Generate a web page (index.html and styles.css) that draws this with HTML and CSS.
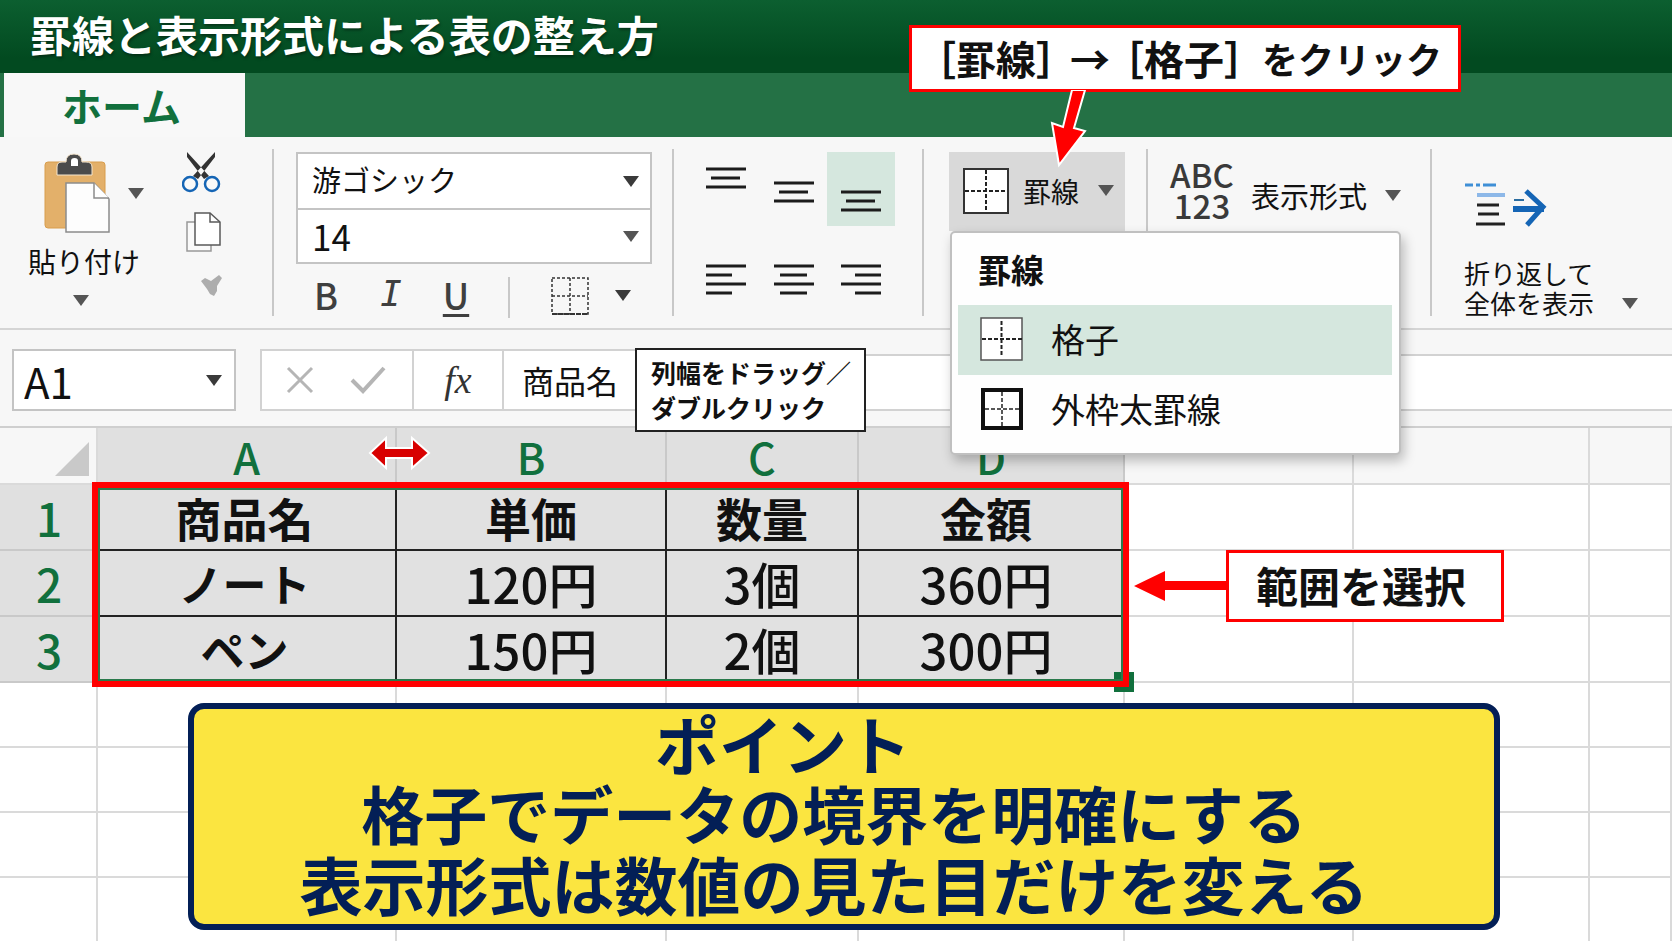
FILE: index.html
```html
<!DOCTYPE html>
<html lang="ja">
<head>
    <meta charset="UTF-8">
    <meta name="viewport" content="width=device-width, initial-scale=1.0">
    <title>罫線と表示形式による表の整え方</title>
    <link rel="stylesheet" href="styles.css">
</head>
<body>
    <header class="title-bar">
        <h1>罫線と表示形式による表の整え方</h1>
    </header>
    <nav class="tabs">
        <button type="button" class="tab">ホーム</button>
    </nav>

    <section class="ribbon">
        <!-- クリップボード -->
        <div class="group group-clipboard">
            <div class="paste">
                <button type="button" class="paste-button" aria-label="貼り付け">
                    <svg width="68" height="80" viewBox="0 0 68 80">
                        <rect x="1" y="9" width="60" height="66" rx="3" fill="#e3b06a" stroke="#d89d4c"/>
                        <path d="M13 22v-8q0-5 5-5h4q0-8 8-8t8 8h4q6 0 6 5v8z" fill="#4b4b4b" stroke="#f5e6cf" stroke-width="1"/>
                        <path d="M27 13V8q0-3 3.500-3T34 8v5z" fill="#fff"/>
                        <path d="M22 30h28l15 16v33H22z" fill="#fdfdfd" stroke="#8c8c8c" stroke-width="1.500"/>
                        <path d="M50 30v15h15" fill="#fff" stroke="#8c8c8c" stroke-width="1.500"/>
                    </svg>
                    <span class="caret"></span>
                </button>
                <span class="paste-label">貼り付け</span>
                <span class="caret"></span>
            </div>
            <div class="clip-tools">
                <button type="button" aria-label="切り取り">
                    <svg width="42" height="44" viewBox="0 0 42 44">
                        <path d="M5 3v5l17 22 5-3zM33 3v5L16 30l-5-3z" fill="#333"/>
                        <circle cx="8" cy="35" r="7" fill="#f9f9f9" stroke="#1565b5" stroke-width="2.500"/>
                        <circle cx="30" cy="35" r="7" fill="#f9f9f9" stroke="#1565b5" stroke-width="2.500"/>
                    </svg>
                </button>
                <button type="button" aria-label="コピー">
                    <svg width="42" height="44" viewBox="0 0 42 44">
                        <path d="M5 13h24v29H5z" fill="#fafafa" stroke="#999" stroke-width="1.500"/>
                        <path d="M13 4h15l10 9v23H13z" fill="#fff" stroke="#5a5a5a" stroke-width="1.500"/>
                        <path d="M28 4v9h10" fill="none" stroke="#5a5a5a" stroke-width="1.500"/>
                    </svg>
                </button>
                <button type="button" aria-label="書式のコピー">
                    <svg width="42" height="36" viewBox="0 0 42 36">
                        <path d="M19 12l4-3 6 3 8-6 3 3-5 8v5l-3 5-4-2-3-5z" fill="#adadad"/>
                    </svg>
                </button>
            </div>
        </div>

        <!-- フォント -->
        <div class="group group-font">
            <div class="combo">
                <div class="combo-row">
                    <select class="font-name" aria-label="フォント名"><option>游ゴシック</option></select>
                    <span class="caret dark"></span>
                </div>
                <div class="combo-row">
                    <select class="font-size" aria-label="フォントサイズ"><option>14</option></select>
                    <span class="caret"></span>
                </div>
            </div>
            <div class="font-tools">
                <button type="button" class="bold" aria-label="太字">B</button>
                <button type="button" class="italic" aria-label="斜体">I</button>
                <button type="button" class="underline" aria-label="下線">U</button>
                <button type="button" class="line-tool" aria-label="罫線の種類">
                    <svg width="40" height="40" viewBox="0 0 40 40">
                        <path d="M2 2h36v36H2zM20 2v36M2 20h36" fill="none" stroke="#333" stroke-width="1.500" stroke-dasharray="3 2"/>
                        <path d="M2 38h36" stroke="#333" stroke-width="2" stroke-dasharray="5 1"/>
                    </svg>
                    <span class="caret dark"></span>
                </button>
            </div>
        </div>

        <!-- 配置 -->
        <div class="group group-align">
            <button type="button" class="align-top" aria-label="上揃え">
                <svg width="40" height="22" viewBox="0 0 40 22"><path d="M0 2h40M5 11h29M0 20h40"/></svg>
            </button>
            <button type="button" class="align-middle" aria-label="上下中央揃え">
                <svg width="40" height="22" viewBox="0 0 40 22"><path d="M0 2h40M5 11h29M0 20h40"/></svg>
            </button>
            <button type="button" class="align-bottom" aria-label="下揃え">
                <svg width="40" height="22" viewBox="0 0 40 22"><path d="M0 2h40M5 11h29M0 20h40"/></svg>
            </button>
            <button type="button" aria-label="左揃え">
                <svg width="40" height="31" viewBox="0 0 40 31"><path d="M0 2h40M0 11h26M0 20h40M0 29h26"/></svg>
            </button>
            <button type="button" aria-label="中央揃え">
                <svg width="40" height="31" viewBox="0 0 40 31"><path d="M0 2h40M6 11h27M0 20h40M6 29h27"/></svg>
            </button>
            <button type="button" aria-label="右揃え">
                <svg width="40" height="31" viewBox="0 0 40 31"><path d="M0 2h40M14 11h26M0 20h40M14 29h26"/></svg>
            </button>
        </div>

        <!-- 罫線 -->
        <div class="group group-border">
            <button type="button" class="border-button">
                <svg width="46" height="46" viewBox="0 0 46 46">
                    <rect x="1" y="1" width="44" height="44" fill="#fff" stroke="#333" stroke-width="2"/>
                    <path d="M23 2v42M2 23h42" stroke="#222" stroke-width="2" stroke-dasharray="4 2"/>
                </svg>
                <span>罫線</span>
                <span class="caret"></span>
            </button>
            <div class="menu">
                <h2>罫線</h2>
                <button type="button" class="menu-item active">
                    <svg width="44" height="44" viewBox="0 0 44 44">
                        <rect x="1" y="1" width="41" height="42" fill="#fff" stroke="#555" stroke-width="1.500"/>
                        <path d="M21.500 4v36M2 22h40" stroke="#222" stroke-width="2" stroke-dasharray="4 2"/>
                    </svg>
                    <span>格子</span>
                </button>
                <button type="button" class="menu-item">
                    <svg width="44" height="44" viewBox="0 0 44 44">
                        <rect x="3" y="3" width="38" height="38" fill="#fff" stroke="#111" stroke-width="4"/>
                        <path d="M22 5v34M5 22h34" stroke="#222" stroke-width="1.500" stroke-dasharray="4 2"/>
                    </svg>
                    <span>外枠太罫線</span>
                </button>
            </div>
        </div>

        <!-- 表示形式 -->
        <div class="group group-format">
            <button type="button" class="format-button">
                <span class="abc">ABC<br>123</span>
                <span class="format-label">表示形式 <span class="caret"></span></span>
            </button>
        </div>

        <div class="group group-wrap">
            <button type="button" class="wrap-button">
                <svg width="84" height="46" viewBox="0 0 84 46">
                    <path d="M1 4h8M12 4h4M19 4h13" stroke="#3f8fd6" stroke-width="3"/>
                    <path d="M13 14h28" stroke="#8db8e8" stroke-width="4"/>
                    <path d="M13 24h22M14 33h21M12 43h29" stroke="#222" stroke-width="3"/>
                    <path d="M50 19h10" stroke="#2a6ca0" stroke-width="2"/>
                    <path d="M49 28h31" stroke="#1565b5" stroke-width="6"/>
                    <path d="M62 10l17 16-16 18" fill="none" stroke="#1565b5" stroke-width="5"/>
                </svg>
                <span class="wrap-text">
                    <span>折り返して<br>全体を表示</span>
                    <span class="caret"></span>
                </span>
            </button>
        </div>
    </section>

    <section class="formula-row">
        <div class="name-box">
            <input type="text" value="A1" aria-label="名前ボックス">
            <span class="caret dark"></span>
        </div>
        <div class="formula-box">
            <div class="formula-buttons">
                <button type="button" aria-label="キャンセル">
                    <svg width="28" height="28" viewBox="0 0 28 28"><path d="M2 2l24 24M26 2L2 26" stroke="#b5b5b5" stroke-width="3"/></svg>
                </button>
                <button type="button" aria-label="入力">
                    <svg width="36" height="28" viewBox="0 0 36 28"><path d="M2 14l11 11L34 2" fill="none" stroke="#b5b5b5" stroke-width="4"/></svg>
                </button>
            </div>
            <button type="button" class="fx">fx</button>
            <input type="text" class="formula" value="商品名" aria-label="数式バー">
        </div>
        <div class="formula-rest"></div>
        <div class="tip">列幅をドラッグ／<br>ダブルクリック</div>
    </section>

    <main class="sheet">
        <table>
            <colgroup>
                <col class="col-head"><col class="col-a"><col class="col-b"><col class="col-c"><col class="col-d"><col class="col-e"><col class="col-f"><col>
            </colgroup>
            <thead>
                <tr>
                    <th class="corner"><svg width="34" height="34" viewBox="0 0 34 34"><path d="M34 0v34H0z" fill="#c9c9c9"/></svg></th>
                    <th class="on">A</th><th class="on">B</th><th class="on">C</th><th class="on">D</th>
                    <th></th><th></th><th></th>
                </tr>
            </thead>
            <tbody>
                <tr class="picked names"><th>1</th><td>商品名</td><td>単価</td><td>数量</td><td>金額</td><td></td><td></td><td></td></tr>
                <tr class="picked"><th>2</th><td>ノート</td><td>120円</td><td>3個</td><td>360円</td><td></td><td></td><td></td></tr>
                <tr class="picked"><th>3</th><td>ペン</td><td>150円</td><td>2個</td><td>300円</td><td></td><td></td><td></td></tr>
                <tr><th></th><td></td><td></td><td></td><td></td><td></td><td></td><td></td></tr>
                <tr><th></th><td></td><td></td><td></td><td></td><td></td><td></td><td></td></tr>
                <tr><th></th><td></td><td></td><td></td><td></td><td></td><td></td><td></td></tr>
                <tr><th></th><td></td><td></td><td></td><td></td><td></td><td></td><td></td></tr>
            </tbody>
        </table>
        <div class="fill-handle"></div>
        <div class="selection"></div>
        <svg class="resize-arrow" width="64" height="36" viewBox="0 0 64 36">
            <path d="M2 18L18 3v10h26V3l17 15-17 15V23H18v10z" fill="#d80000" stroke="#fff" stroke-width="2"/>
        </svg>
        <div class="range-note">
            <svg width="92" height="32" viewBox="0 0 92 32"><path d="M0 16L31 1v10h61v9H31v11z" fill="#f00"/></svg>
            <span>範囲を選択</span>
        </div>
        <div class="point">
            <h2>ポイント</h2>
            <p>格子でデータの境界を明確にする<br>表示形式は数値の見た目だけを変える</p>
        </div>
    </main>

    <div class="step-note">
        <span>［罫線］</span><span class="to">→</span><span>［格子］</span><span class="kana">をクリック</span>
        <svg class="step-arrow" width="44" height="78" viewBox="0 0 44 78">
            <path d="M24 0L15 37 4 33l7 42 26-34-11-3L37 0z" fill="#f00" stroke="#fff" stroke-width="2"/>
        </svg>
    </div>
</body>
</html>
```
FILE: styles.css
```css
* {
    box-sizing: border-box;
}
body {
    margin: 0;
    min-height: 100vh;
    display: flex;
    flex-direction: column;
    position: relative;
    overflow: hidden;
    font-family: "Noto Sans CJK JP", sans-serif;
    color: #111;
    background: #fff;
}
h1, h2, p {
    margin: 0;
}
button, input, select {
    font-family: inherit;
    color: inherit;
    background: none;
    border: none;
    padding: 0;
    margin: 0;
}
svg {
    display: block;
    flex: none;
}
.title-bar {
    height: 73px;
    padding: 0 0 6px 30px;
    display: flex;
    align-items: center;
    background: linear-gradient(#0c5f30, #024a20 80%);
}
.title-bar h1 {
    font-size: 42px;
    line-height: 66px;
    font-weight: bold;
    color: #fff;
    text-shadow: 1px 2px 3px rgba(0, 0, 0, 0.4);
}
.tabs {
    height: 64px;
    padding-left: 4px;
    background: #247145;
}
.tab {
    width: 241px;
    height: 64px;
    padding: 0 6px 0 0;
    font-size: 40px;
    font-weight: bold;
    color: #11703d;
    background: #f8f8f8;
}
.caret {
    flex: none;
    border-left: 8px solid transparent;
    border-right: 8px solid transparent;
    border-top: 11px solid #555;
}
.caret.dark {
    border-top-color: #3a3a3a;
}

/* リボン */
.ribbon {
    display: flex;
    padding: 12px 0;
    background: #f7f7f7;
    border-bottom: 2px solid #d5d5d5;
}
.group {
    height: 167px;
    flex: none;
    border-right: 2px solid #c8c8c8;
}
.group-clipboard {
    width: 274px;
    padding-left: 28px;
    display: flex;
    gap: 40px;
}
.paste {
    width: 114px;
    display: flex;
    flex-direction: column;
}
.paste-button {
    display: flex;
    align-items: center;
    gap: 16px;
    padding: 4px 0 0 16px;
}
.paste-label {
    font-size: 28px;
    line-height: 56px;
    white-space: nowrap;
}
.paste > .caret {
    width: 16px;
    margin: 6px 0 0 45px;
}
.clip-tools {
    display: flex;
    flex-direction: column;
    gap: 16px;
}
.group-font {
    width: 400px;
    padding: 3px 20px 0 22px;
}
.combo {
    border: 2px solid #c4c4c4;
    background: #fff;
}
.combo-row {
    display: flex;
    align-items: center;
    height: 54px;
    padding-right: 11px;
}
.combo-row + .combo-row {
    border-top: 2px solid #c4c4c4;
}
.combo-row select {
    appearance: none;
    flex: 1;
    height: 52px;
    padding: 0 0 4px 14px;
}
.font-name {
    font-size: 29px;
}
.font-size {
    font-size: 35px;
}
.font-tools {
    display: flex;
    align-items: center;
    height: 41px;
    margin-top: 13px;
    padding-left: 9px;
    color: #3f3f3f;
}
.font-tools button {
    width: 42px;
    padding-bottom: 8px;
    font-size: 36px;
    line-height: 36px;
    font-weight: 500;
}
.font-tools .italic {
    margin: 0 23px;
    font-family: "DejaVu Sans Mono", monospace;
    font-size: 36px;
    font-style: italic;
}
.font-tools .underline {
    text-decoration: underline;
    text-decoration-thickness: 3px;
    text-underline-offset: 4px;
}
.font-tools .line-tool {
    width: 128px;
    height: 41px;
    display: flex;
    align-items: center;
    gap: 25px;
    margin-left: 31px;
    padding: 0 0 4px 40px;
    border-left: 2px solid #c8c8c8;
}
.group-align {
    width: 250px;
    padding: 3px 0 0 18px;
    display: grid;
    grid-template-columns: 68px 67px 68px;
    grid-template-rows: 74px 50px;
    row-gap: 28px;
}
.group-align button {
    display: flex;
    justify-content: center;
    align-items: center;
}
.group-align path {
    stroke: #1c1c1c;
    stroke-width: 3;
}
.group-align .align-top {
    align-items: flex-start;
    padding-top: 15px;
}
.group-align .align-middle {
    padding-top: 6px;
}
.group-align .align-bottom {
    align-items: flex-end;
    padding-bottom: 14px;
    background: #d5e7de;
}
.group-border {
    width: 224px;
    padding: 3px 0 0 25px;
    position: relative;
}
.border-button {
    display: flex;
    align-items: center;
    gap: 14px;
    width: 176px;
    height: 79px;
    padding: 0 0 2px 14px;
    font-size: 28px;
    background: #d9d9d9;
}
.border-button .caret {
    margin-left: 5px;
}
.menu {
    position: absolute;
    left: 26px;
    top: 82px;
    z-index: 5;
    width: 451px;
    padding: 4px 7px 8px 6px;
    border: 2px solid #c0c0c0;
    border-radius: 5px;
    background: #fefefe;
    box-shadow: 3px 6px 12px rgba(0, 0, 0, 0.25);
}
.menu h2 {
    padding: 0 0 4px 20px;
    font-size: 33px;
    line-height: 64px;
    font-weight: bold;
}
.menu-item {
    display: flex;
    align-items: center;
    gap: 27px;
    width: 100%;
    height: 70px;
    padding: 0 0 2px 22px;
    font-size: 34px;
    line-height: 44px;
}
.menu-item.active {
    background: #d5e7de;
}
.group-format {
    width: 284px;
    padding: 0 0 0 21px;
}
.format-button {
    display: flex;
    align-items: center;
    gap: 16px;
    height: 82px;
    font-size: 29px;
}
.format-label {
    display: flex;
    align-items: center;
    gap: 18px;
    padding-top: 10px;
}
.abc {
    width: 66px;
    font-size: 33px;
    line-height: 31px;
    font-weight: 500;
    color: #3a3a3a;
}
.group-wrap {
    flex: 1;
    padding: 32px 0 0 32px;
    border-right: none;
}
.wrap-button {
    text-align: left;
}
.wrap-text {
    display: flex;
    align-items: flex-end;
    gap: 28px;
    margin-top: 31px;
    font-size: 26px;
    line-height: 30px;
    white-space: nowrap;
}
.wrap-text .caret {
    margin-bottom: 9px;
}

/* 数式バー */
.formula-row {
    display: flex;
    height: 98px;
    padding: 19px 0 0 12px;
    position: relative;
    background: #f7f7f7;
    border-bottom: 2px solid #cfcfcf;
}
.name-box {
    display: flex;
    align-items: center;
    width: 224px;
    height: 62px;
    padding: 0 12px 0 10px;
    border: 2px solid #c4c4c4;
    background: #fff;
}
.name-box input {
    flex: 1;
    width: 100px;
    height: 58px;
    font-size: 42px;
}
.formula-box {
    display: flex;
    width: 400px;
    height: 62px;
    margin-left: 24px;
    border: 2px solid #d2d2d2;
    border-right: none;
    background: #fff;
}
.formula-buttons {
    display: flex;
    align-items: center;
    gap: 36px;
    width: 152px;
    padding-left: 24px;
    border-right: 2px solid #d2d2d2;
}
.fx {
    width: 90px;
    border-right: 2px solid #d2d2d2;
    font-family: "Liberation Serif", serif;
    font-size: 38px;
    font-style: italic;
    color: #333;
}
.formula {
    flex: 1;
    width: 100px;
    padding-left: 18px;
    font-size: 32px;
}
.formula-rest {
    flex: 1;
    height: 57px;
    margin-top: 5px;
    border: 2px solid #d2d2d2;
    border-width: 2px 0;
    background: #fff;
}
.tip {
    position: absolute;
    left: 635px;
    top: 18px;
    z-index: 3;
    width: 231px;
    padding: 5px 0 5px 14px;
    border: 2px solid #222;
    background: #fff;
    font-size: 25px;
    line-height: 35px;
    font-weight: bold;
    white-space: nowrap;
}

/* シート */
.sheet {
    position: relative;
    flex: 1;
}
table {
    width: 100%;
    table-layout: fixed;
    border-collapse: separate;
    border-spacing: 0;
}
.col-head { width: 98px; }
.col-a { width: 299px; }
.col-b { width: 270px; }
.col-c { width: 192px; }
.col-d { width: 266px; }
.col-e { width: 229px; }
.col-f { width: 236px; }
th, td {
    height: 65px;
    padding: 0;
    border-right: 2px solid #dadada;
    border-bottom: 2px solid #dadada;
    text-align: center;
    font-size: 49px;
    line-height: 60px;
    font-weight: 500;
}
th {
    color: #11703d;
}
thead th {
    height: 57px;
    font-size: 43px;
    line-height: 50px;
    background: #f7f7f7;
}
thead .on, .picked th {
    background: #e0e0e0;
    border-color: #c9c9c9;
}
.corner svg {
    margin: 6px 0 0 55px;
}
.picked th, .picked td {
    height: 66px;
}
.picked th {
    font-size: 46px;
    padding-left: 2px;
}
.picked td:nth-child(2) {
    padding-right: 4px;
    font-size: 44px;
    font-weight: bold;
}
.picked td:nth-child(5) {
    padding-right: 10px;
}
.picked.names td {
    font-size: 46px;
    font-weight: bold;
}
.picked td:nth-child(-n+5) {
    background: #e1e1e1;
    border-color: #222;
}
.selection {
    position: absolute;
    left: 92px;
    top: 54px;
    width: 1037px;
    height: 205px;
    border: 6px solid #f00;
    box-shadow: inset 0 0 0 2px #2a7a4c;
}
.fill-handle {
    position: absolute;
    left: 1114px;
    top: 244px;
    width: 20px;
    height: 20px;
    background: #11703d;
}
.resize-arrow {
    position: absolute;
    left: 368px;
    top: 7px;
}
.range-note {
    position: absolute;
    left: 1134px;
    top: 122px;
    display: flex;
    align-items: center;
}
.range-note span {
    padding: 0 35px 2px 27px;
    border: 3px solid #f00;
    background: #fff;
    font-size: 42px;
    line-height: 64px;
    font-weight: bold;
}
.point {
    position: absolute;
    left: 188px;
    top: 275px;
    width: 1312px;
    padding: 0 20px 6px 0;
    border: 6px solid #031f56;
    border-radius: 16px;
    background: #fbe540;
    color: #031f56;
    font-weight: bold;
    text-align: center;
    white-space: nowrap;
}
.point h2 {
    padding-right: 102px;
    font-size: 64px;
    line-height: 67px;
}
.point p {
    font-size: 63px;
    line-height: 71px;
}

.step-note {
    position: absolute;
    left: 909px;
    top: 25px;
    z-index: 6;
    display: flex;
    align-items: center;
    padding: 0 16px 0 4px;
    border: 3px solid #f00;
    background: #fff;
    font-size: 40px;
    line-height: 61px;
    font-weight: bold;
    white-space: nowrap;
}
.step-note .to {
    margin: 0 -6px;
}
.step-note .kana {
    margin-left: -2px;
    font-size: 36px;
}
.step-arrow {
    position: absolute;
    left: 136px;
    top: 62px;
}
```
